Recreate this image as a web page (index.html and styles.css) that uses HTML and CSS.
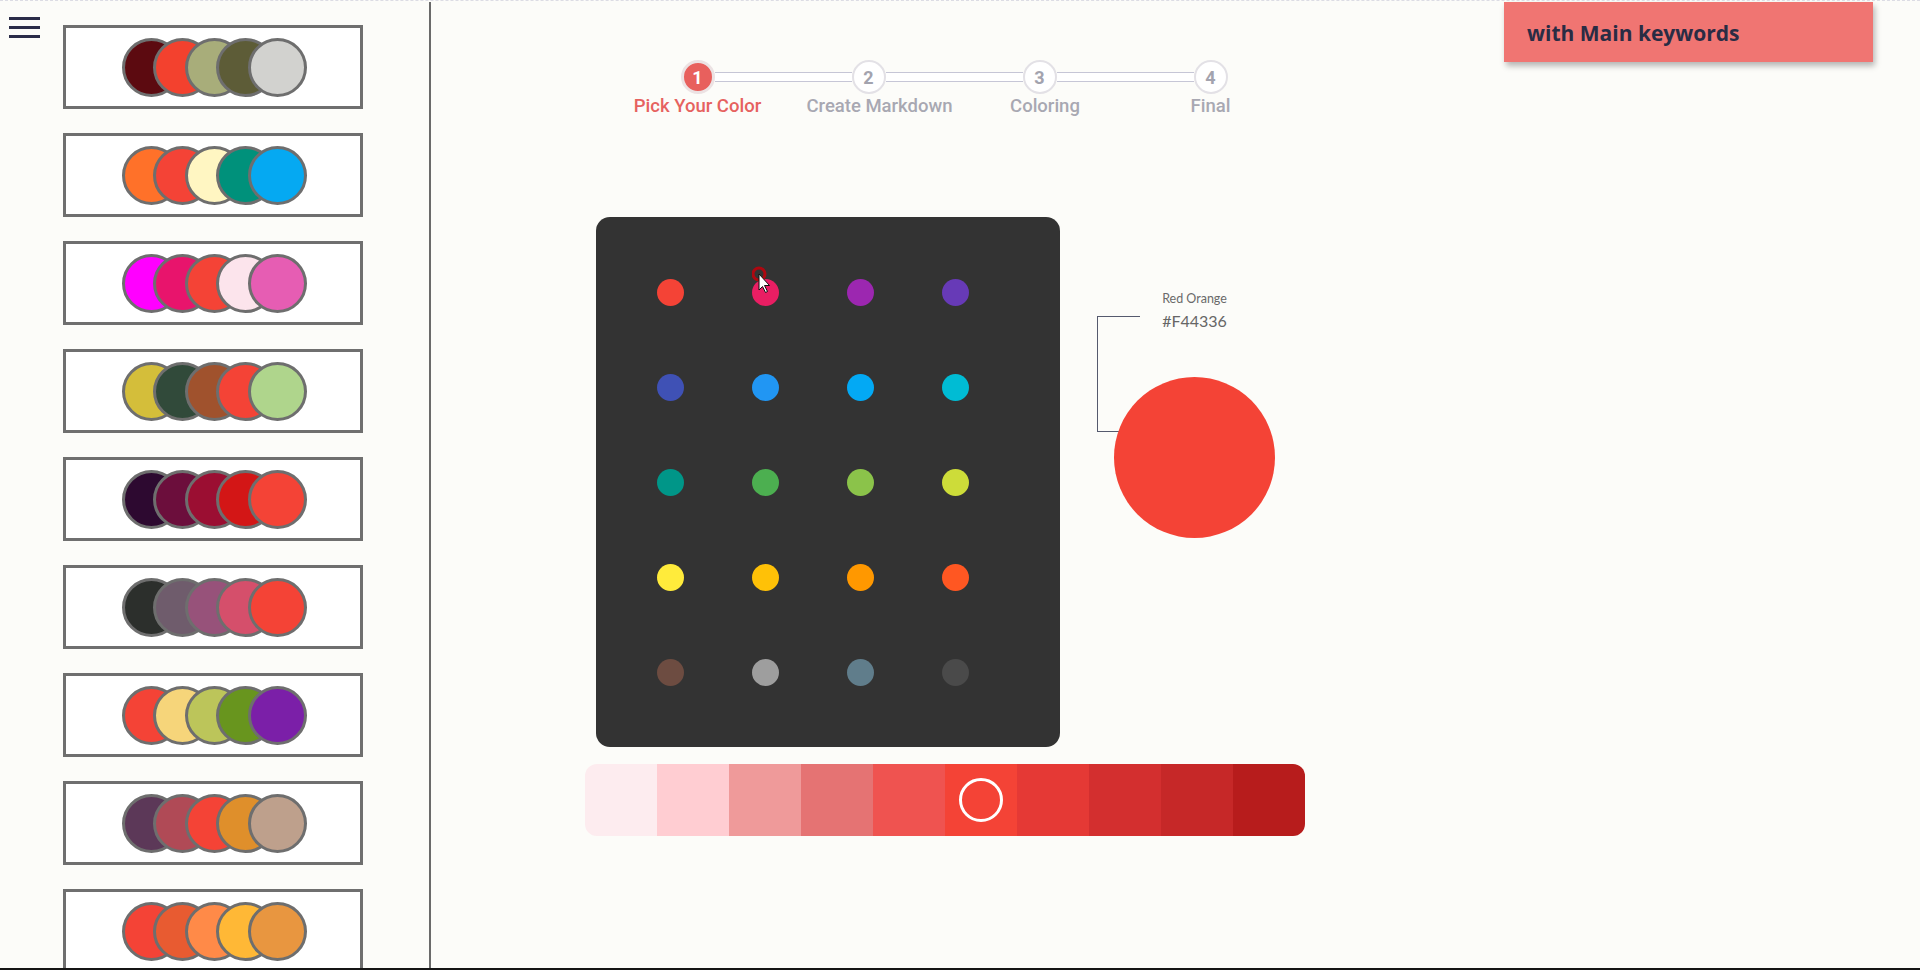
FILE: index.html
```html
<!DOCTYPE html>
<html lang="en">
<head>
<meta charset="utf-8">
<title>Color Picker</title>
<link rel="stylesheet" href="styles.css">
</head>
<body>
<div class="page">
  <aside class="sidebar">
    <div class="menu"><span></span><span></span><span></span></div>
    <div class="palettes">
      <div class="card"><div class="swatches"><i style="background:#5c0a10"></i><i style="background:#f3412e"></i><i style="background:#a8ad7a"></i><i style="background:#5d5c37"></i><i style="background:#d2d2cf"></i></div></div>
      <div class="card"><div class="swatches"><i style="background:#ff7129"></i><i style="background:#f44336"></i><i style="background:#fff6c2"></i><i style="background:#00917b"></i><i style="background:#05a9f2"></i></div></div>
      <div class="card"><div class="swatches"><i style="background:#ff00ff"></i><i style="background:#e8146c"></i><i style="background:#f44336"></i><i style="background:#fce4ec"></i><i style="background:#e65db3"></i></div></div>
      <div class="card"><div class="swatches"><i style="background:#d4be3a"></i><i style="background:#314a3a"></i><i style="background:#a0522d"></i><i style="background:#f44336"></i><i style="background:#afd58c"></i></div></div>
      <div class="card"><div class="swatches"><i style="background:#2d0930"></i><i style="background:#6c0e3c"></i><i style="background:#9b0e32"></i><i style="background:#d31616"></i><i style="background:#f44336"></i></div></div>
      <div class="card"><div class="swatches"><i style="background:#2c2f2c"></i><i style="background:#6f5c6c"></i><i style="background:#97527a"></i><i style="background:#d54f6b"></i><i style="background:#f44336"></i></div></div>
      <div class="card"><div class="swatches"><i style="background:#f44336"></i><i style="background:#f6d57a"></i><i style="background:#bcc55a"></i><i style="background:#68951e"></i><i style="background:#7b1fa8"></i></div></div>
      <div class="card"><div class="swatches"><i style="background:#5c3858"></i><i style="background:#b04a56"></i><i style="background:#f44336"></i><i style="background:#df8f2b"></i><i style="background:#bea08c"></i></div></div>
      <div class="card"><div class="swatches"><i style="background:#f44336"></i><i style="background:#e85b31"></i><i style="background:#ff8a48"></i><i style="background:#ffb836"></i><i style="background:#e89640"></i></div></div>
    </div>
  </aside>

  <main class="main">
    <div class="tag">with Main keywords</div>

    <div class="stepper">
      <div class="track-row">
        <div class="step active">1</div>
        <div class="track"></div>
        <div class="step">2</div>
        <div class="track"></div>
        <div class="step">3</div>
        <div class="track"></div>
        <div class="step">4</div>
      </div>
      <div class="labels">
        <div class="label active">Pick Your Color</div>
        <div class="label second">Create Markdown</div>
        <div class="label third">Coloring</div>
        <div class="label">Final</div>
      </div>
    </div>

    <div class="workspace">
      <div class="panel">
        <div class="dots">
          <i style="background:#f44336"></i><i style="background:#e91e63"></i><i style="background:#9c27b0"></i><i style="background:#673ab7"></i>
          <i style="background:#3f51b5"></i><i style="background:#2196f3"></i><i style="background:#03a9f4"></i><i style="background:#00bcd4"></i>
          <i style="background:#009688"></i><i style="background:#4caf50"></i><i style="background:#8bc34a"></i><i style="background:#cddc39"></i>
          <i style="background:#ffeb3b"></i><i style="background:#ffc107"></i><i style="background:#ff9800"></i><i style="background:#ff5722"></i>
          <i style="background:#6d4c41"></i><i style="background:#9e9e9e"></i><i style="background:#607d8b"></i><i style="background:#4a4a4a"></i>
        </div>
        <svg class="cursor" width="24" height="28" viewBox="0 0 24 28">
          <circle cx="7" cy="8" r="6" fill="none" stroke="#c4000a" stroke-width="3" opacity="0.85"/>
          <path d="M7 8 L7 24 L10.5 20.5 L13.5 26.5 L15.5 25.5 L12.5 19.5 L17.5 19.5 Z" fill="#ffffff" stroke="#111111" stroke-width="1"/>
        </svg>
      </div>

      <div class="info">
        <div class="bracket"></div>
        <div class="name">Red Orange</div>
        <div class="hex">#F44336</div>
        <div class="big"></div>
      </div>
    </div>

    <div class="shades">
      <span style="background:#fdecef"></span>
      <span style="background:#ffcdd2"></span>
      <span style="background:#ef9a9a"></span>
      <span style="background:#e57373"></span>
      <span style="background:#ef5350"></span>
      <span class="current" style="background:#f44336"><b class="ring"></b></span>
      <span style="background:#e53935"></span>
      <span style="background:#d32f2f"></span>
      <span style="background:#c62828"></span>
      <span style="background:#b71c1c"></span>
    </div>
  </main>
</div>
</body>
</html>
```

FILE: styles.css
```css
* { box-sizing: border-box; }

html, body {
  margin: 0;
  padding: 0;
  background: #fcfcf9;
}

.page {
  display: flex;
  height: 970px;
  overflow: hidden;
  border-top: 1px dashed #dcdce4;
  border-bottom: 2px solid #151515;
}

/* ---------- sidebar ---------- */
.sidebar {
  width: 431px;
  flex: none;
  display: flex;
  border-right: 2px solid #6a6a6a;
  margin-top: 1px;
}

.menu {
  width: 63px;
  flex: none;
  padding: 15px 0 0 9px;
  display: flex;
  flex-direction: column;
  gap: 6px;
}

.menu span {
  display: block;
  width: 31px;
  height: 3px;
  background: #2a2c49;
}

.palettes {
  display: flex;
  flex-direction: column;
  gap: 24px;
  padding-top: 23px;
}

.card {
  width: 300px;
  height: 84px;
  flex: none;
  border: 3px solid #6f6f6f;
  background: #ffffff;
  display: flex;
  align-items: center;
  justify-content: center;
}

.swatches {
  display: flex;
  padding-left: 2px;
}

.swatches i {
  display: block;
  width: 59px;
  height: 59px;
  border-radius: 50%;
  border: 3px solid #6e6e6e;
  margin-left: -27.5px;
}

.swatches i:first-child { margin-left: 0; }

/* ---------- main ---------- */
.main {
  flex: 1;
  position: relative;
  padding: 59px 0 0 154px;
}

.tag {
  position: absolute;
  top: 1px;
  right: 47px;
  width: 369px;
  height: 60px;
  background: #f07572;
  box-shadow: 2px 4px 6px rgba(0, 0, 0, 0.28);
  display: flex;
  align-items: center;
  padding: 2px 0 0 23px;
  font-family: "Open Sans", "Noto Sans", sans-serif;
  font-weight: 700;
  font-size: 21px;
  color: #2a2c44;
}

.stepper {
  margin-left: 27px;
  width: 684px;
}

.track-row {
  display: flex;
  align-items: center;
  padding: 0 68.5px;
}

.step {
  width: 34px;
  height: 34px;
  flex: none;
  border-radius: 50%;
  border: 2px solid #e3e1e6;
  background: #ffffff;
  display: flex;
  align-items: center;
  justify-content: center;
  font-family: Roboto, "Liberation Sans", sans-serif;
  font-weight: 700;
  font-size: 18px;
  color: #a3a3ae;
}

.step.active {
  background: #e8605d;
  border: 3px solid #ece2e3;
  color: #ffffff;
}

.track {
  flex: 1;
  height: 10px;
  border-top: 1px solid #c6c6d6;
  border-bottom: 1px solid #c6c6d6;
  background: #ffffff;
}

.labels {
  display: grid;
  grid-template-columns: repeat(4, 171px);
  margin-top: 1px;
}

.label {
  text-align: center;
  font-family: Roboto, "Liberation Sans", sans-serif;
  font-weight: 500;
  font-size: 18.5px;
  line-height: 22px;
  color: #a8a8b2;
  white-space: nowrap;
}

.label.second { padding-left: 22px; }
.label.third { padding-left: 11px; }

.label.active { color: #e6625f; }

.workspace {
  display: flex;
  align-items: flex-start;
  margin-top: 100px;
}

.panel {
  position: relative;
  margin-left: 11px;
  background: #333333;
  border-radius: 14px;
  padding: 62px 91px 61px 61px;
}

.dots {
  display: grid;
  grid-template-columns: repeat(4, 27px);
  grid-auto-rows: 27px;
  gap: 68px;
}

.dots i {
  display: block;
  width: 27px;
  height: 27px;
  border-radius: 50%;
}

.cursor {
  position: absolute;
  left: 156px;
  top: 49px;
}

.info {
  position: relative;
  margin-left: 37px;
  padding: 74px 0 0 17px;
}

.bracket {
  position: absolute;
  left: 0;
  top: 99px;
  width: 43px;
  height: 116px;
  border: 1px solid #555a6e;
  border-right: none;
}

.name {
  width: 161px;
  text-align: center;
  font-family: Lato, "Liberation Sans", sans-serif;
  font-size: 12.5px;
  line-height: 16px;
  color: #6a6a6a;
}

.hex {
  width: 161px;
  margin-top: 4px;
  text-align: center;
  font-family: Lato, "Liberation Sans", sans-serif;
  font-size: 16px;
  line-height: 19px;
  color: #666666;
}

.big {
  position: relative;
  z-index: 1;
  width: 161px;
  height: 161px;
  margin-top: 47px;
  border-radius: 50%;
  background: #f44336;
}

.shades {
  display: flex;
  width: 720px;
  height: 72px;
  margin-top: 17px;
  border-radius: 12px;
  overflow: hidden;
}

.shades span {
  flex: 1;
  display: flex;
  align-items: center;
  justify-content: center;
}

.ring {
  display: block;
  width: 44px;
  height: 44px;
  border: 3px solid #ffffff;
  border-radius: 50%;
}
```
